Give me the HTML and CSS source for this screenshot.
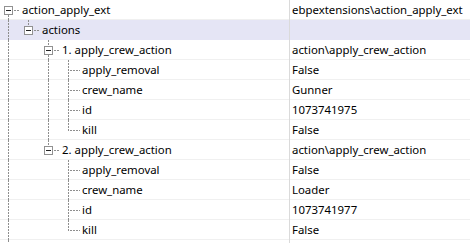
FILE: index.html
```html
<!DOCTYPE html>
<html>
<head>
<meta charset="utf-8">
<link rel="stylesheet" href="styles.css">
</head>
<body>
<div class="tree">
  <div class="row">
    <div class="name"><span class="g exp no-up"><span class="box"><span class="minus"></span></span></span><span class="label">action_apply_ext</span></div>
    <div class="value">ebpextensions\action_apply_ext</div>
  </div>
  <div class="row selected">
    <div class="name"><span class="g pipe"></span><span class="g exp no-down"><span class="box"><span class="minus"></span></span></span><span class="label">actions</span></div>
    <div class="value"></div>
  </div>
  <div class="row">
    <div class="name"><span class="g pipe"></span><span class="g"></span><span class="g exp"><span class="box"><span class="minus"></span></span></span><span class="label">1. apply_crew_action</span></div>
    <div class="value">action\apply_crew_action</div>
  </div>
  <div class="row">
    <div class="name"><span class="g pipe"></span><span class="g"></span><span class="g pipe"></span><span class="g tee"></span><span class="label">apply_removal</span></div>
    <div class="value">False</div>
  </div>
  <div class="row">
    <div class="name"><span class="g pipe"></span><span class="g"></span><span class="g pipe"></span><span class="g tee"></span><span class="label">crew_name</span></div>
    <div class="value">Gunner</div>
  </div>
  <div class="row">
    <div class="name"><span class="g pipe"></span><span class="g"></span><span class="g pipe"></span><span class="g tee"></span><span class="label">id</span></div>
    <div class="value">1073741975</div>
  </div>
  <div class="row">
    <div class="name"><span class="g pipe"></span><span class="g"></span><span class="g pipe"></span><span class="g elbow"></span><span class="label">kill</span></div>
    <div class="value">False</div>
  </div>
  <div class="row">
    <div class="name"><span class="g pipe"></span><span class="g"></span><span class="g exp no-down"><span class="box"><span class="minus"></span></span></span><span class="label">2. apply_crew_action</span></div>
    <div class="value">action\apply_crew_action</div>
  </div>
  <div class="row">
    <div class="name"><span class="g pipe"></span><span class="g"></span><span class="g"></span><span class="g tee"></span><span class="label">apply_removal</span></div>
    <div class="value">False</div>
  </div>
  <div class="row">
    <div class="name"><span class="g pipe"></span><span class="g"></span><span class="g"></span><span class="g tee"></span><span class="label">crew_name</span></div>
    <div class="value">Loader</div>
  </div>
  <div class="row">
    <div class="name"><span class="g pipe"></span><span class="g"></span><span class="g"></span><span class="g tee"></span><span class="label">id</span></div>
    <div class="value">1073741977</div>
  </div>
  <div class="row">
    <div class="name"><span class="g pipe"></span><span class="g"></span><span class="g"></span><span class="g elbow"></span><span class="label">kill</span></div>
    <div class="value">False</div>
  </div>
  <div class="row tail">
    <div class="name"><span class="g pipe"></span></div>
    <div class="value"></div>
  </div>
</div>
</body>
</html>
```
FILE: styles.css
```css
html, body {
  margin: 0;
  padding: 0;
  background: #ffffff;
  overflow: hidden;
}
body {
  width: 470px;
  height: 243px;
  font-family: "Noto Sans", "Open Sans", sans-serif;
  font-size: 11.4px;
  color: #000000;
}
.tree {
  display: flex;
  flex-direction: column;
}
.row {
  display: grid;
  grid-template-columns: 290px 1fr;
  height: 20px;
  flex: none;
  background: linear-gradient(#f0f0f0, #f0f0f0) 0 19px / 100% 1px no-repeat;
}
.row.selected {
  background: #e5e5f5;
}
.row.tail {
  height: 3px;
  background: none;
  overflow: hidden;
}
.name {
  display: flex;
  align-items: flex-start;
  height: 20px;
  border-right: 1px solid #dadada;
  white-space: nowrap;
  overflow: hidden;
}
.tail .name {
  height: 3px;
}
.value {
  padding-left: 2px;
  line-height: 19px;
  white-space: nowrap;
}
.label {
  margin-left: 2px;
  line-height: 19px;
}
.g {
  display: block;
  flex: none;
  width: 20px;
  height: 20px;
}
.pipe {
  background: repeating-linear-gradient(to bottom, #8e8e8e 0 2px, transparent 2px 3px) 8px 0 / 1px 20px no-repeat;
}
.tee {
  background:
    repeating-linear-gradient(to bottom, #8e8e8e 0 2px, transparent 2px 3px) 8px 0 / 1px 20px no-repeat,
    repeating-linear-gradient(to right, #8e8e8e 0 2px, transparent 2px 3px) 10px 10px / 10px 1px no-repeat;
}
.elbow {
  background:
    repeating-linear-gradient(to bottom, #8e8e8e 0 2px, transparent 2px 3px) 8px 0 / 1px 11px no-repeat,
    repeating-linear-gradient(to right, #8e8e8e 0 2px, transparent 2px 3px) 10px 10px / 10px 1px no-repeat;
}
.exp {
  background:
    repeating-linear-gradient(to bottom, #8e8e8e 0 2px, transparent 2px 3px) 8px 0 / 1px 6px no-repeat,
    repeating-linear-gradient(to bottom, #8e8e8e 0 2px, transparent 2px 3px) 8px 15px / 1px 5px no-repeat,
    repeating-linear-gradient(to right, #8e8e8e 0 2px, transparent 2px 3px) 14px 10px / 6px 1px no-repeat;
}
.exp.no-up {
  background:
    repeating-linear-gradient(to bottom, #8e8e8e 0 2px, transparent 2px 3px) 8px 15px / 1px 5px no-repeat,
    repeating-linear-gradient(to right, #8e8e8e 0 2px, transparent 2px 3px) 14px 10px / 6px 1px no-repeat;
}
.exp.no-down {
  background:
    repeating-linear-gradient(to bottom, #8e8e8e 0 2px, transparent 2px 3px) 8px 0 / 1px 6px no-repeat,
    repeating-linear-gradient(to right, #8e8e8e 0 2px, transparent 2px 3px) 14px 10px / 6px 1px no-repeat;
}
.box {
  display: flex;
  align-items: center;
  justify-content: center;
  box-sizing: border-box;
  width: 9px;
  height: 9px;
  margin: 6px 0 0 4px;
  border: 1px solid #919191;
  background: #ffffff;
}
.minus {
  display: block;
  width: 5px;
  height: 1px;
  background: #222222;
}
```
